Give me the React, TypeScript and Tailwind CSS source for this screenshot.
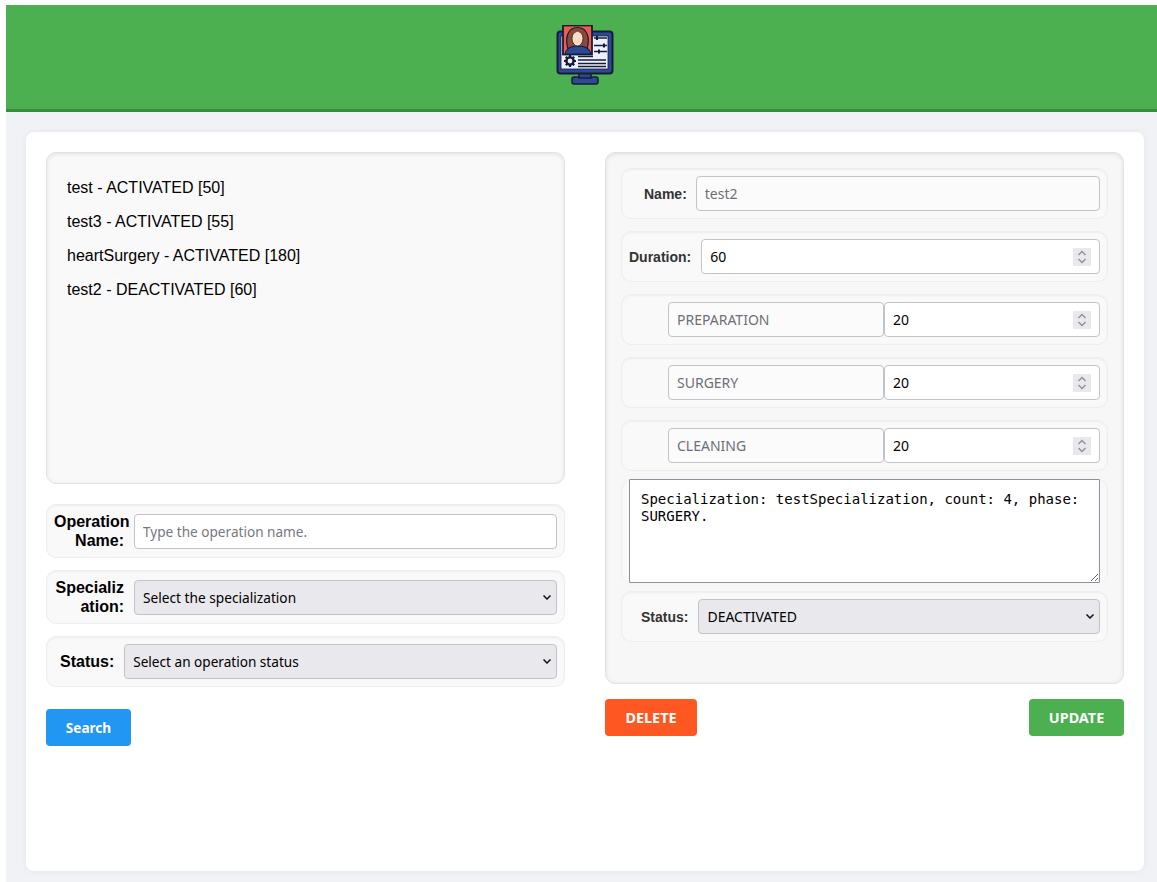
const sans = "font-['Noto_Sans',sans-serif]";
const rowClass =
  "flex items-center rounded-[10px] border border-[#eeeeee] bg-[#f9f9f9] shadow-[inset_0_1px_2px_rgba(0,0,0,0.05)]";
const inputClass =
  "h-[35px] rounded border border-[#c4c4c8] px-2 text-sm font-['Noto_Sans',sans-serif] outline-none";
const selectClass =
  "h-[35px] w-full appearance-none rounded border border-[#c4c4c8] bg-[#e9e9ed] px-2 text-black font-['Noto_Sans',sans-serif] outline-none";

const Logo = () => (
  <svg width="60" height="60" viewBox="0 0 60 60" className="mb-[4px]">
    <rect x="17" y="52" width="26" height="7" rx="2" fill="#2c4a94" stroke="#161c36" strokeWidth="1.500" />
    <rect x="24" y="48" width="12" height="5" fill="#2c4a94" stroke="#161c36" strokeWidth="1.500" />
    <rect x="2.500" y="6.500" width="55" height="42" rx="3" fill="#2c4a94" stroke="#161c36" strokeWidth="2" />
    <rect x="6" y="11" width="47" height="33" fill="#eef0ff" stroke="#161c36" strokeWidth="0.800" />
    <rect x="8" y="0.500" width="29" height="29" fill="#ec5b50" stroke="#161c36" strokeWidth="1.800" />
    <path d="M13 24 C10 14 12 2.500 22.500 2.500 C33 2.500 35 14 32 24 Z" fill="#8c4a36" stroke="#161c36" strokeWidth="1.200" />
    <path d="M10 29 C11 23 16 21 23 21 C30 21 35 23 36 29 Z" fill="#2c4a94" stroke="#161c36" strokeWidth="1.200" />
    <ellipse cx="22.500" cy="13.500" rx="5.500" ry="7.500" fill="#fcdcc4" stroke="#161c36" strokeWidth="0.800" />
    <path d="M16.500 9 C19 9 21.500 7.500 22.500 5.500 C23.500 7.500 26 9 28.500 9 L28.500 6 L16.500 6 Z" fill="#8c4a36" />
    <g stroke="#161c36" strokeWidth="1.500">
      <path d="M39 13 H52 M39 20.500 H52 M39 26.500 H52" />
      <path d="M42 11 V15 M49 18.500 V22.500 M44 24.500 V28.500" strokeWidth="2" />
      <path d="M23 31.500 H38 M23 35 H51 M23 38.500 H51 M23 41.500 H51" />
    </g>
    <circle cx="15" cy="36" r="3.600" fill="none" stroke="#161c36" strokeWidth="2.400" />
    <path d="M15 30 V33 M15 39 V42 M9 36 H12 M18 36 H21 M10.800 31.800 L13 34 M17 38 L19.200 40.200 M19.200 31.800 L17 34 M13 38 L10.800 40.200" stroke="#161c36" strokeWidth="2.200" />
  </svg>
);

const NumberField = ({ value }: { value: string }) => (
  <div className="relative min-w-0 flex-1">
    <input
      readOnly
      type="number"
      value={value}
      className={inputClass + " w-full bg-white text-black [appearance:textfield] [&::-webkit-inner-spin-button]:appearance-none"}
    />
    <span className="absolute right-[9px] top-[9px] flex h-[18px] w-[18px] items-center justify-center bg-[#e9e9ed]">
      <svg width="10" height="14" viewBox="0 0 10 14" fill="none" stroke="#8f8f9d" strokeWidth="1.400">
        <path d="M1.500 5 L5 1.500 L8.500 5" />
        <path d="M1.500 9 L5 12.500 L8.500 9" />
      </svg>
    </span>
  </div>
);

const SelectField = ({ label, size }: { label: string; size: string }) => (
  <div className="relative min-w-0 flex-1">
    <select className={selectClass + " " + size}>
      <option>{label}</option>
    </select>
    <svg
      width="8"
      height="5"
      viewBox="0 0 8 5"
      fill="none"
      stroke="#111"
      strokeWidth="1.500"
      className="pointer-events-none absolute right-[6px] top-[15px]"
    >
      <path d="M0.500 0.500 L4 4 L7.500 0.500" />
    </svg>
  </div>
);

const PhaseRow = ({ name }: { name: string }) => (
  <div className={rowClass + " h-[51px] pl-[46px] pr-[7px]"}>
    <input
      readOnly
      placeholder={name}
      className={inputClass + " w-[216px] bg-[#fbfbfb] placeholder:text-[#6f6f78]"}
    />
    <NumberField value="20" />
  </div>
);

export default function App() {
  return (
    <div className="h-[882px] w-[1157px] overflow-hidden bg-white pl-[6px] pt-[5px]">
      <div className="h-[877px] w-[1158px] bg-[#f0f2f5]">
        <header className="flex h-[107px] items-center justify-center border-b-[3px] border-[#388e3c] bg-[#4caf50]">
          <Logo />
        </header>
        <main className="mx-5 mt-5 h-[739px] rounded-lg bg-white p-5 shadow-[0_0_6px_rgba(0,0,0,0.06)]">
          <div className="grid grid-cols-2 gap-10">
            <section>
              <div className="h-[332px] rounded-[10px] border border-[#e2e2e2] bg-[#f9f9f9] pl-[20px] pt-[18px] font-['Liberation_Sans',sans-serif] text-base text-black shadow-[inset_0_1px_4px_rgba(0,0,0,0.1)]">
                <p className="h-[34px] leading-[34px]">test - ACTIVATED [50]</p>
                <p className="h-[34px] leading-[34px]">test3 - ACTIVATED [55]</p>
                <p className="h-[34px] leading-[34px]">heartSurgery - ACTIVATED [180]</p>
                <p className="h-[34px] leading-[34px]">test2 - DEACTIVATED [60]</p>
              </div>

              <div className={rowClass + " mt-5 h-[54px] px-[7px]"}>
                <label className="mr-[10px] w-[70px] shrink-0 text-right font-['Liberation_Sans',sans-serif] text-base font-bold leading-[19px] text-black">
                  <span className="-mr-[5px] block whitespace-nowrap">Operation</span>
                  Name:
                </label>
                <input
                  readOnly
                  placeholder="Type the operation name."
                  className={inputClass + " min-w-0 flex-1 bg-white text-[13.6px] placeholder:text-[#77777f]"}
                />
              </div>
              <div className={rowClass + " mt-3 h-[54px] px-[7px]"}>
                <label className="mr-[10px] w-[70px] shrink-0 break-all text-right font-['Liberation_Sans',sans-serif] text-base font-bold leading-[19px] text-black">
                  Specialization:
                </label>
                <SelectField label="Select the specialization" size="pt-[2px] text-[13.7px]" />
              </div>
              <div className={rowClass + " mt-3 h-[51px] px-[7px]"}>
                <label className="ml-[6px] mr-[10px] font-['Liberation_Sans',sans-serif] text-base font-bold text-black">
                  Status:
                </label>
                <SelectField label="Select an operation status" size="pt-[2px] text-[13.6px]" />
              </div>
              <button className={"mt-[22px] h-[37px] w-[85px] rounded bg-[#2196f3] pt-[2px] text-[13.6px] font-bold text-white " + sans}>
                Search
              </button>
            </section>

            <section>
              <div className="h-[532px] rounded-[10px] border border-[#e2e2e2] bg-[#f7f7f8] px-[15px] pt-[15px] shadow-[inset_0_1px_4px_rgba(0,0,0,0.1)]">
                <div className="flex flex-col gap-3">
                  <div className={rowClass + " h-[51px] pr-[7px]"}>
                    <label className="ml-[22px] mr-[9px] font-['Liberation_Sans',sans-serif] text-sm font-bold text-[#333]">
                      Name:
                    </label>
                    <input
                      readOnly
                      placeholder="test2"
                      className={inputClass + " min-w-0 flex-1 bg-[#fbfbfb] placeholder:text-[#6f6f78]"}
                    />
                  </div>
                  <div className={rowClass + " h-[51px] pr-[7px]"}>
                    <label className="ml-[7px] mr-[10px] font-['Liberation_Sans',sans-serif] text-sm font-bold text-[#333]">
                      Duration:
                    </label>
                    <NumberField value="60" />
                  </div>
                  <PhaseRow name="PREPARATION" />
                  <PhaseRow name="SURGERY" />
                  <PhaseRow name="CLEANING" />
                </div>
                <div className={rowClass + " mt-2 h-[104px] items-stretch border-y-0 px-[7px]"}>
                  <textarea
                    readOnly
                    value="Specialization: testSpecialization, count: 4, phase: SURGERY."
                    className="h-[104px] w-full rounded-[1px] border border-[#8f8f9d] bg-white px-[11px] pb-[9px] pt-[11px] font-['DejaVu_Sans_Mono',monospace] text-sm leading-[17px] text-black outline-none"
                  />
                </div>
                <div className={rowClass + " mt-2 h-[51px] pr-[7px]"}>
                  <label className="ml-[19px] mr-[10px] font-['Liberation_Sans',sans-serif] text-sm font-bold text-[#333]">
                    Status:
                  </label>
                  <SelectField label="DEACTIVATED" size="text-sm" />
                </div>
              </div>
              <div className="mt-[15px] flex justify-between">
                <button className={"h-[37px] w-[92px] rounded bg-[#ff5722] text-[14.4px] font-bold text-white " + sans}>
                  DELETE
                </button>
                <button className={"h-[37px] w-[95px] rounded bg-[#4caf50] text-[14.4px] font-bold text-white " + sans}>
                  UPDATE
                </button>
              </div>
            </section>
          </div>
        </main>
      </div>
    </div>
  );
}
